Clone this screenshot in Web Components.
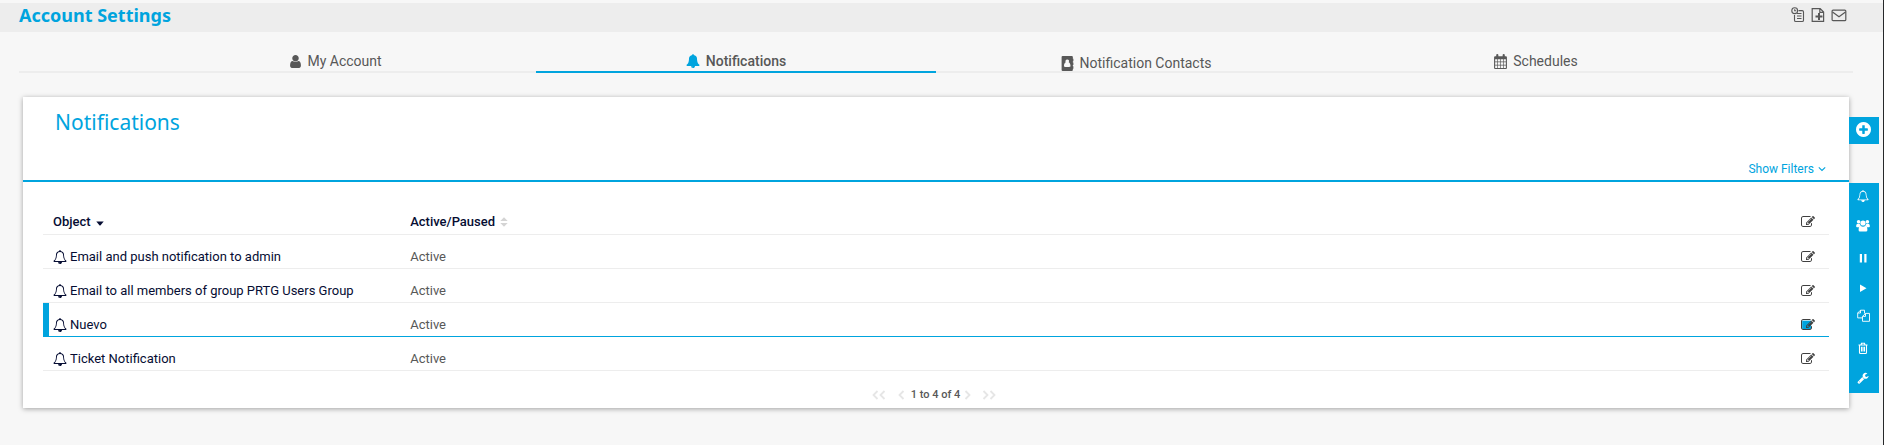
<!DOCTYPE html>
<html lang="en">
<head>
<meta charset="utf-8">
<title>Account Settings</title>
<style>
:root{--accent:#00a4de;--ink:#060d33;--text:#585858;--line:#ededed;--page:#f7f7f7}
html{background:var(--page)}
body{margin:0;min-height:100vh;box-sizing:border-box;border-right:1px solid #26282a;background:var(--page);color:var(--text);font:13px/20px Roboto,"Liberation Sans",sans-serif}
</style>
</head>
<body>
<settings-page></settings-page>
<script>
const BELL_BODY='q0-52-38 90t-90 38h-448q0 106-75 181t-181 75-181-75-75-181h-448q-52 0-90-38t-38-90q50-42 91-88t85-119.5 74.5-158.5 50-206 19.5-260q0-152 117-282.5t307-158.5q-8-19-8-39 0-40 28-68t68-28 68 28 28 68q0 20-8 39 190 28 307 158.5t117 282.5q0 139 19.5 260t50 206 74.5 158.5 85 119.5 91 88z'.replace('q0-52','q0 52');
const BELL_CLAPPER='M912 1696q0-16-16-16-59 0-101.5-42.5t-42.5-101.5q0-16-16-16t-16 16q0 73 51.5 124.5t124.5 51.5q16 0 16-16';
const EDIT='<path d="M888 1184l116-116-152-152-116 116v56h96v96h56zm440-720q-16-16-33 1l-350 350q-17 17-1 33t33-1l350-350q17-17 1-33zm80 594v190q0 119-84.5 203.5t-203.5 84.5h-832q-119 0-203.5-84.5t-84.5-203.5v-832q0-119 84.5-203.5t203.5-84.5h832q63 0 117 25 15 7 18 23 3 17-9 29l-49 49q-14 14-32 8-23-6-45-6h-832q-66 0-113 47t-47 113v832q0 66 47 113t113 47h832q66 0 113-47t47-113v-126q0-13 9-22l64-64q15-15 35-7t20 29zm-96-738l288 288-672 672h-288v-288zm444 132l-92 92-288-288 92-92q28-28 68-28t68 28l152 152q28 28 28 68t-28 68z"/>';
// name: [viewBox, markup]
const ICONS={
 user:['256 128 1280 1536','<path d="M1536 1399q0 109-62.5 187t-150.5 78h-854q-88 0-150.5-78t-62.5-187q0-85 8.5-160.5t31.5-152 58.5-131 94-89 134.5-34.5q131 128 313 128t313-128q76 0 134.5 34.5t94 89 58.5 131 31.5 152 8.5 160.5zm-256-887q0 159-112.5 271.5t-271.5 112.5-271.5-112.5-112.5-271.5 112.5-271.5 271.5-112.5 271.5 112.5 112.5 271.5z"/>'],
 bell:['0 0 1792 1792',`<path d="${BELL_CLAPPER}zm816-288${BELL_BODY}"/>`],
 belloutline:['0 0 1792 1792',`<path d="${BELL_CLAPPER}zm-666-288h1300q-266-300-266-832 0-51-24-105t-69-103-121.5-80.5-169.5-31.5-169.5 31.5-121.5 80.5-69 103-24 105q0 532-266 832zm1482 0${BELL_BODY}"/>`],
 edit:['0 0 1792 1792',EDIT],
 editon:['0 0 1792 1792','<path fill="#00a4de" d="M150 340h1150v1080H150z"/>'+EDIT],
 plus:['128 128 1536 1536','<path d="M1344 960v-128q0-26-19-45t-45-19h-256v-256q0-26-19-45t-45-19h-128q-26 0-45 19t-19 45v256h-256q-26 0-45 19t-19 45v128q0 26 19 45t45 19h256v256q0 26 19 45t45 19h128q26 0 45-19t19-45v-256h256q26 0 45-19t19-45zm320-64q0 209-103 385.5t-279.5 279.5-385.5 103-385.5-103-279.5-279.5-103-385.5 103-385.5 279.5-279.5 385.5-103 385.5 103 279.5 279.5 103 385.5z"/>'],
 wrench:['0 0 1792 1792','<path d="M448 1472q0-26-19-45t-45-19-45 19-19 45 19 45 45 19 45-19 19-45zm644-420l-682 682q-37 37-90 37-52 0-91-37l-106-108q-38-36-38-90 0-53 38-91l681-681q39 98 114.5 173.5t173.5 114.5zm634-435q0 39-23 106-47 134-164.5 217.5t-258.5 83.5q-185 0-316.5-131.5t-131.5-316.5 131.5-316.5 316.5-131.5q58 0 121.5 16.5t107.5 46.5q16 11 16 28t-16 28l-293 169v224l193 107q5-3 79-48.5t135.5-81 70.5-35.5q15 0 23.5 10t8.5 25z"/>'],
 contacts:['0 0 12 14','<path fill-rule="evenodd" d="M1.500 0h8.500a1 1 0 0 1 1 1v1.500h.5v2.500h-.5v1h.5v2.500h-.5v1h.5v2.500h-.5v1a1 1 0 0 1-1 1H1.500a1 1 0 0 1-1-1V1a1 1 0 0 1 1-1zM5.700 3.200a1.600 1.600 0 0 0-1.300 2.600C3.300 6.300 2.700 7.700 2.700 9.200c0 .8.4 1.100 1.100 1.100h3.900c.7 0 1.100-.3 1.100-1.100 0-1.500-.6-2.900-1.700-3.400A1.600 1.600 0 0 0 5.700 3.200z"/>'],
 calendar:['0 0 12 14','<path fill-rule="evenodd" d="M1 2h1V1a1 1 0 0 1 2 0v1h4V1a1 1 0 0 1 2 0v1h1a1 1 0 0 1 1 1v10a1 1 0 0 1-1 1H1a1 1 0 0 1-1-1V3a1 1 0 0 1 1-1zM1 5v2h2V5zm2.600 0v2h2.100V5zm2.700 0v2h2.100V5zM9 5v2h2V5zM1 7.700v2.300h2V7.700zm2.600 0v2.300h2.100V7.700zm2.700 0v2.300h2.100V7.700zM9 7.700v2.300h2V7.700zM1 10.700v2.300h2v-2.300zm2.600 0v2.300h2.100v-2.300zm2.700 0v2.300h2.100v-2.300zM9 10.700v2.300h2v-2.300z"/>'],
 report:['0 0 14 16','<g fill="none" stroke="currentColor" stroke-width="1.100"><circle cx="3.700" cy="3.700" r="2.900"/><path d="M3.700 2.200v1.600h1.500M7.500 3.600h3.700q1.300 0 1.300 1.300v8.300q0 1.300-1.300 1.300H4.800Q3.500 14.500 3.500 13.200V8M6 6.500h4.500M6 9h4.500M6 11.500h4.500"/></g>'],
 fileplus:['0 0 14 16','<g fill="none" stroke="currentColor"><path stroke-width="1.200" d="M1.200 1.600h8l3.400 3.400v9.400H1.200zM8.800 1.600v3.700h3.800"/><path stroke-width="2" d="M8 6v7M4.500 9.500h7"/></g>'],
 mail:['0 0 16 16','<g fill="none" stroke="currentColor" stroke-width="1.200"><rect x="1.100" y="3.100" width="13.700" height="10.600" rx="1"/><path d="M1.500 5l6.500 4.700L14.500 5"/></g>'],
 down:['0 0 8 8','<path fill="none" stroke="currentColor" stroke-width="1.100" d="M.8 2.300L4 5.500l3.200-3.200"/>'],
 sortdown:['0 0 8 8','<path d="M.3 3.500h7.400L4.600 7.300q-.6.600-1.200 0z"/>'],
 sort:['0 0 8 10','<path d="M.3 4L4 .2 7.700 4zM.3 6L4 9.800 7.700 6z"/>'],
 users:['0 0 14 14','<circle cx="2.600" cy="2.700" r="1.800"/><circle cx="11.400" cy="2.700" r="1.800"/><circle cx="7" cy="4" r="2.600"/><path d="M.2 7.800V6.600Q.4 4.800 1.600 4.700l2.100.1Q3.900 6.300 5 7.100 3.500 7 3 8.200H.8zM13.800 7.800V6.600Q13.600 4.800 12.400 4.700l-2.100.1Q10.100 6.300 9 7.100q1.500-.1 2 1.100h2.200zM2.600 11q0-3.800 2.200-3.900Q7 8.400 9.200 7.100q2.200.1 2.200 3.900 0 1.500-1.400 1.500H4Q2.600 12.500 2.600 11z"/>'],
 pause:['0 0 14 14','<path d="M3.800 3H6v8.500H3.800zM8.300 3h2.200v8.500H8.300z"/>'],
 play:['0 0 14 14','<path d="M4 3.500l6.500 3.800L4 11z"/>'],
 copy:['0 0 14 14','<path fill="none" stroke="currentColor" stroke-width=".9" d="M6.500 8.900H1.700V4L4.500 1.200h4v3.300M4.500 1.200V4H1.700M9.500 4.400h4v7.900h-7V7.400zM9.500 4.400v3h-3"/>'],
 trash:['0 0 14 14','<path fill="none" stroke="currentColor" stroke-width="1.100" d="M2.500 4h9M5 4l.5-1.700h3L9 4M3.500 4v7.500q0 1 1 1h5q1 0 1-1V4M5.500 5.800v4.700M7 5.800v4.700M8.500 5.800v4.700"/>'],
 prev:['0 0 7 10','<path fill="none" stroke="currentColor" stroke-width="1.800" d="M5.500 1L1.500 5l4 4"/>'],
 next:['0 0 7 10','<path fill="none" stroke="currentColor" stroke-width="1.800" d="M1.500 1l4 4-4 4"/>'],
 first:['0 0 14 10','<path fill="none" stroke="currentColor" stroke-width="1.800" d="M5.500 1L1.500 5l4 4M12.500 1l-4 4 4 4"/>'],
 last:['0 0 14 10','<path fill="none" stroke="currentColor" stroke-width="1.800" d="M1.500 1l4 4-4 4M8.500 1l4 4-4 4"/>']
};
const RESET='button,a{font:inherit;color:inherit;text-decoration:none}button{border:0;padding:0;background:none;cursor:pointer}';
function define(name,css,markup){
 customElements.define(name,class extends HTMLElement{
  constructor(){super();this.attachShadow({mode:'open'});}
  connectedCallback(){
   const m=typeof markup==='function'?markup(this):markup;
   this.shadowRoot.innerHTML=`<style>${RESET}${css}</style>${m}`;
  }
 });
}
define('ui-icon',':host{display:inline-flex;flex:none}svg{display:block;fill:currentColor}',el=>{
 const [box,body]=ICONS[el.getAttribute('name')];
 const w=el.getAttribute('w'),h=el.getAttribute('h')||w;
 return `<svg aria-hidden="true" width="${w}" height="${h}" viewBox="${box}">${body}</svg>`;
});
define('page-header',`:host{display:flex;align-items:center;justify-content:space-between;height:29px;margin-top:3px;padding:0 36px 0 19px;background:#ededed}
h1{margin:0;padding-bottom:4px;font:bold 18px/25px "Noto Sans",sans-serif;color:var(--accent)}
nav{display:flex;gap:6px;padding-bottom:5px}button{display:flex}`,
`<h1><slot></slot></h1><nav aria-label="Page actions"><button aria-label="Add report"><ui-icon name="report" w="14" h="16"></ui-icon></button><button aria-label="Add file"><ui-icon name="fileplus" w="14" h="16"></ui-icon></button><button aria-label="Send email"><ui-icon name="mail" w="16"></ui-icon></button></nav>`);
define('tab-bar',`:host{display:block;margin:18px 30px 24px 19px;border-bottom:2px solid var(--line)}
nav{display:flex;justify-content:center;margin-bottom:-2px}`,'<nav aria-label="Account sections"><slot></slot></nav>');
define('tab-item',`:host{flex:0 1 400px}a{display:flex;align-items:center;justify-content:center;gap:6px;height:20px;padding-top:1px;border-bottom:2px solid transparent;font-size:14px;line-height:20px}
:host([selected]) a{border-color:var(--accent);font-weight:500}:host([selected]) ui-icon{color:var(--accent)}:host([low]) a{height:16px;padding-top:5px}`,
el=>`<a href="#"${el.hasAttribute('selected')?' aria-current="page"':''}><ui-icon name="${el.getAttribute('icon')}" w="${el.getAttribute('size')}" h="${el.getAttribute('tall')||14}"></ui-icon><slot></slot></a>`);
define('panel-card',`:host{display:block;min-width:0;background:#fff;box-shadow:0 1px 5px rgba(0,0,0,.35)}
header{display:flex;flex-direction:column;padding:12px 23px 0 32px;height:71px;border-bottom:2px solid var(--accent)}
h2{margin:0;font:21px/27px "Noto Sans",sans-serif;color:var(--accent)}
button{display:flex;align-items:center;align-self:flex-end;gap:4px;margin-top:auto;font-size:12px;line-height:22px;color:var(--accent)}
.body{padding:19px 20px 0}`,
`<header><h2><slot name="title"></slot></h2><button>Show Filters<ui-icon name="down" w="8"></ui-icon></button></header><div class="body"><slot></slot></div>`);
const ROWS=['Email and push notification to admin','Email to all members of group PRTG Users Group','Nuevo','Ticket Notification'];
define('object-table',`:host{display:block}
table{width:100%;table-layout:fixed;border-collapse:separate;border-spacing:0}
th,td{height:20px;padding:12px 0 1px 10px;border-bottom:1px solid var(--line);text-align:left;font-size:13px;line-height:20px}
th{padding-top:11px;padding-bottom:2px;font-weight:500;color:var(--ink)}.object{width:20%;box-sizing:border-box}.tools{width:14px;padding-right:14px;padding-left:0}
th button,td a,.tools button{display:flex;align-items:center}th button{gap:5px}td a{gap:3px;color:var(--ink)}.tools button{color:#404040}
.on td{border-color:var(--accent)}.on td:first-child{box-shadow:inset 6px 0 var(--accent)}.sort{color:#d4d4d4}`,
()=>`<table><thead><tr><th class="object"><button>Object<ui-icon name="sortdown" w="8"></ui-icon></button></th><th><button>Active/Paused<ui-icon class="sort" name="sort" w="8" h="10"></ui-icon></button></th><th class="tools"><button aria-label="Edit all"><ui-icon name="edit" w="14"></ui-icon></button></th></tr></thead><tbody>${
ROWS.map((t,i)=>`<tr${i===2?' class="on"':''}><td><a href="#"><ui-icon name="belloutline" w="14"></ui-icon><span>${t}</span></a></td><td>Active</td><td class="tools"><button aria-label="Edit ${t}"><ui-icon name="${i===2?'editon':'edit'}" w="14"></ui-icon></button></td></tr>`).join('')}</tbody></table>`);
define('table-pager',`:host{display:flex;justify-content:center;align-items:center;height:37px;padding:11px 4px 0 0;font-size:11px;font-weight:500;box-sizing:border-box}
button{display:flex;color:#e6e6e6}.first{margin-right:12px}.prev{margin-right:6px}.next{margin:0 11px 0 4px}`,
`<button class="first" aria-label="First page"><ui-icon name="first" w="14" h="10"></ui-icon></button><button class="prev" aria-label="Previous page"><ui-icon name="prev" w="7" h="10"></ui-icon></button><span><slot></slot></span><button class="next" aria-label="Next page"><ui-icon name="next" w="7" h="10"></ui-icon></button><button aria-label="Last page"><ui-icon name="last" w="14" h="10"></ui-icon></button>`);
define('action-rail',`:host{display:block;padding-top:20px}
button{display:flex;align-items:center;justify-content:center;width:100%;height:30px;padding-right:2px;background:var(--accent);color:#fff}
.add{height:27px;padding-bottom:2px;margin-bottom:39px}.up{padding-bottom:4px}`,
`<button class="add" aria-label="Add notification"><ui-icon name="plus" w="15"></ui-icon></button>`+
[['belloutline','Test',12,1],['users','Access rights',14,1],['pause','Pause',14],['play','Resume',14],['copy','Clone',14,1],['trash','Delete',14],['wrench','Settings',12]].map(([n,l,s,u])=>`<button${u?' class="up"':''} aria-label="${l}"><ui-icon name="${n}" w="${s}"></ui-icon></button>`).join(''));
define('settings-page',':host{display:block}main{display:grid;grid-template-columns:minmax(0,1fr) 30px;align-items:start;padding:0 4px 36px 23px}',
`<page-header>Account Settings</page-header>
<tab-bar><tab-item icon="user" size="11" tall="13">My Account</tab-item><tab-item icon="bell" size="14" selected>Notifications</tab-item><tab-item icon="contacts" size="13" tall="15" low>Notification Contacts</tab-item><tab-item icon="calendar" size="13" tall="15">Schedules</tab-item></tab-bar>
<main><panel-card><span slot="title">Notifications</span><object-table></object-table><table-pager>1 to 4 of 4</table-pager></panel-card><action-rail></action-rail></main>`);
</script>
</body>
</html>
